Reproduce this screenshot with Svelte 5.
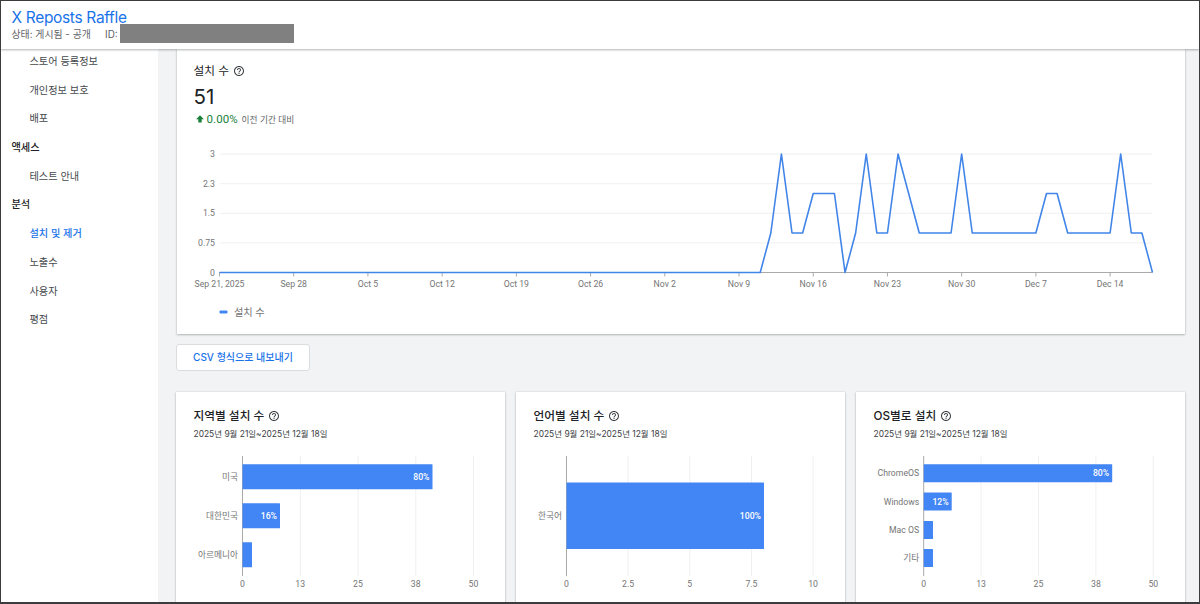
<script>
  const nav = [
    { label: '스토어 등록정보' },
    { label: '개인정보 보호' },
    { label: '배포' },
    { label: '액세스', heading: true },
    { label: '테스트 안내' },
    { label: '분석', heading: true },
    { label: '설치 및 제거', active: true },
    { label: '노출수' },
    { label: '사용자' },
    { label: '평점' }
  ];

  const daily = [
    ...Array(52).fill(0),
    1, 3, 1, 1, 2, 2, 2, 0, 1, 3, 1, 1, 3, 2, 1, 1, 1, 1, 3,
    1, 1, 1, 1, 1, 1, 1, 2, 2, 1, 1, 1, 1, 1, 3, 1, 1, 0
  ];
  const x0 = 43.5;
  const step = 933 / 88;
  const baseY = 132.5;
  const dayX = (i) => x0 + i * step;
  const points = daily.map((v, i) => `${dayX(i).toFixed(2)},${(baseY - v * 39.5).toFixed(2)}`).join(' ');
  const yTicks = ['0', '0.75', '1.5', '2.3', '3'];
  const xTicks = ['Sep 21, 2025', 'Sep 28', 'Oct 5', 'Oct 12', 'Oct 19', 'Oct 26', 'Nov 2', 'Nov 9', 'Nov 16', 'Nov 23', 'Nov 30', 'Dec 7', 'Dec 14'];

  const period = '2025년 9월 21일~2025년 12월 18일';
  const cards = [
    {
      title: '지역별 설치 수', axis: 66.5, gap: 57.75, ticks: ['0', '13', '25', '38', '50'], thick: 25,
      bars: [
        { name: '미국', y: 24.3, w: 190, pct: '80%' },
        { name: '대한민국', y: 63.3, w: 37.5, pct: '16%' },
        { name: '아르메니아', y: 102.3, w: 9.5 }
      ]
    },
    {
      title: '언어별 설치 수', axis: 50.5, gap: 61.65, ticks: ['0', '2.5', '5', '7.5', '10'], thick: 66.5,
      bars: [{ name: '한국어', y: 42.5, w: 197.5, pct: '100%' }]
    },
    {
      title: 'OS별로 설치', axis: 67.7, gap: 57.4, ticks: ['0', '13', '25', '38', '50'], thick: 18,
      bars: [
        { name: 'ChromeOS', y: 24.2, w: 188.5, pct: '80%' },
        { name: 'Windows', y: 52.5, w: 28, pct: '12%' },
        { name: 'Mac OS', y: 81, w: 9.3 },
        { name: '기타', y: 109, w: 9.3 }
      ]
    }
  ];
</script>

{#snippet help()}
  <svg class="help" viewBox="0 0 24 24" width="12" height="12" aria-hidden="true">
    <path d="M11 18h2v-2h-2v2zm1-16C6.48 2 2 6.48 2 12s4.480 10 10 10 10-4.480 10-10S17.520 2 12 2zm0 18c-4.410 0-8-3.590-8-8s3.590-8 8-8 8 3.590 8 8-3.590 8-8 8zm0-14c-2.210 0-4 1.790-4 4h2c0-1.100.9-2 2-2s2 .9 2 2c0 2-3 1.750-3 5h2c0-2.250 3-2.500 3-5 0-2.210-1.790-4-4-4z" />
  </svg>
{/snippet}

<div class="page">
  <header>
    <h1>X Reposts Raffle</h1>
    <div class="meta">
      <span class="status">상태: 게시됨 - 공개</span>
      <span class="id">ID:</span>
      <span class="mask"></span>
    </div>
  </header>

  <div class="body">
    <nav>
      {#each nav as item}
        <div class="item" class:heading={item.heading} class:active={item.active}>{item.label}</div>
      {/each}
    </nav>

    <main>
      <section class="card total">
        <div class="top">
          <h2 class="light">설치 수 {@render help()}</h2>
          <div class="count">51</div>
          <div class="change">
            <svg viewBox="0 0 8 8" width="8" height="8" aria-hidden="true"><path d="M4 .3 7.900 4.300H5.700V7.500H2.300V4.300H.1z" /></svg>
            <span class="rate">0.00%</span>
            <span class="versus">이전 기간 대비</span>
          </div>
        </div>
        <svg class="line" width="1009" height="194" viewBox="0 0 1009 194">
          {#each yTicks as t, i}
            {@const y = baseY - i * 29.6}
            <line class={i === 0 ? 'axis' : 'grid'} x1={x0} x2={x0 + 933} y1={y} y2={y} />
            <text x="39" y={y + 3} text-anchor="end">{t}</text>
          {/each}
          {#each xTicks as t, i}
            <line class="axis" x1={dayX(i * 7)} x2={dayX(i * 7)} y1={baseY} y2={baseY + 4} />
            <text x={dayX(i * 7)} y="147" text-anchor="middle">{t}</text>
          {/each}
          <polyline {points} />
          <rect class="bar" x="43.500" y="170.500" width="8" height="3" rx="1" />
          <text class="legend" x="58" y="176">설치 수</text>
        </svg>
      </section>

      <button type="button">CSV 형식으로 내보내기</button>

      <div class="row">
        {#each cards as c}
          <section class="card small">
            <div class="top">
              <h2>{c.title} {@render help()}</h2>
              <div class="period">{period}</div>
            </div>
            <svg width="329" height="163" viewBox="0 0 329 163">
              {#each c.ticks as t, i}
                {@const x = c.axis + i * c.gap}
                <line class={i === 0 ? 'axis' : 'grid'} x1={x} x2={x} y1="16" y2="136" />
                <text {x} y="147" text-anchor="middle">{t}</text>
              {/each}
              {#each c.bars as b}
                <rect class="bar" x={c.axis} y={b.y} width={b.w} height={c.thick} rx="0.500" />
                <text x={c.axis - 4.500} y={b.y + c.thick / 2 + 3.200} text-anchor="end">{b.name}</text>
                {#if b.pct}
                  <text class="pct" x={c.axis + b.w - 3} y={b.y + c.thick / 2 + 3.200} text-anchor="end">{b.pct}</text>
                {/if}
              {/each}
            </svg>
          </section>
        {/each}
      </div>
    </main>
  </div>
</div>

<style>
  .page {
    box-sizing: border-box;
    width: 1200px;
    height: 604px;
    display: flex;
    flex-direction: column;
    overflow: hidden;
    border: 1px solid #3c3c3e;
    border-bottom-width: 2px;
    background: #f1f3f4;
    color: #202124;
    font-family: Inter, "Noto Sans CJK KR", sans-serif;
  }
  h1, h2 { margin: 0; font-weight: 400; }
  header {
    box-sizing: border-box;
    flex: none;
    height: 48px;
    padding: 7px 0 0 10.500px;
    background: #fff;
    box-shadow: 0 1px 2px rgba(60, 64, 67, 0.4);
    z-index: 1;
  }
  h1 {
    height: 16px;
    line-height: 19px;
    font-size: 15.500px;
    letter-spacing: -0.33px;
    color: #1a73e8;
  }
  .meta {
    display: flex;
    height: 19px;
    line-height: 20px;
    font-size: 9.900px;
    color: #5f6368;
    white-space: nowrap;
  }
  .status { width: 93.500px; }
  .id { width: 15px; }
  .mask { width: 174px; background: #808080; }
  .body { flex: 1; min-height: 0; display: flex; }
  nav { flex: none; width: 157px; background: #fff; overflow: hidden; }
  .item {
    height: 28.700px;
    line-height: 24px;
    padding-left: 28.500px;
    font-size: 10.200px;
    color: #45494d;
    white-space: nowrap;
  }
  .heading { padding-left: 10.500px; font-weight: 500; color: #202124; }
  .active { font-weight: 500; color: #1a73e8; }
  main { flex: 1; padding-left: 18px; min-width: 0; }
  .card {
    background: #fff;
    box-shadow: 0 1px 2px rgba(60, 64, 67, 0.3), 0 0 2px rgba(60, 64, 67, 0.15);
    overflow: hidden;
  }
  .card > svg { display: block; }
  .total { width: 1008px; height: 285px; margin-left: 0.500px; }
  .total > svg { margin-left: -0.500px; }
  .top { box-sizing: border-box; padding-left: 17.500px; }
  .total .top { height: 91px; padding: 12px 0 0 17px; }
  h2 {
    display: flex;
    align-items: flex-start;
    gap: 4px;
    height: 20px;
    line-height: 20px;
    font-size: 11.700px;
    font-weight: 500;
    color: #202124;
    white-space: nowrap;
  }
  h2.light { font-weight: 400; }
  .help { margin-top: 4px; fill: #3c4043; }
  .count { height: 31px; line-height: 31px; font-size: 20.500px; }
  .change { display: flex; align-items: center; height: 14px; padding-left: 2px; color: #188038; }
  .change svg { fill: #188038; }
  .rate { width: 35px; padding-left: 3px; font: 11.500px Roboto, sans-serif; letter-spacing: 0.1px; }
  .versus { font-size: 8.700px; color: #5f6368; }
  svg text { font-family: Roboto, "Noto Sans CJK KR", sans-serif; font-size: 8.700px; fill: #757575; }
  svg text.legend { font-size: 10.200px; }
  svg text.pct { fill: #fff; font-weight: 500; }
  .grid { stroke: #f0f0f0; stroke-width: 1; }
  .axis { stroke: #aaa; stroke-width: 1; }
  .bar { fill: #4285f4; }
  polyline { fill: none; stroke: #4285e8; stroke-width: 1.600; stroke-linejoin: round; }
  button {
    display: block;
    box-sizing: border-box;
    width: 134px;
    height: 27px;
    margin: 10px 0 21px;
    padding: 0;
    border: 1px solid #dadce0;
    border-radius: 3px;
    background: #fff;
    color: #1a73e8;
    font: 500 10px/23px Inter, "Noto Sans CJK KR", sans-serif;
    white-space: nowrap;
  }
  .row { display: flex; gap: 11px; }
  .small { flex: none; width: 329px; height: 212px; }
  .small .top { height: 48px; padding-top: 14px; }
  .period { height: 16px; line-height: 16px; font-size: 8.450px; color: #3c4043; }
</style>
